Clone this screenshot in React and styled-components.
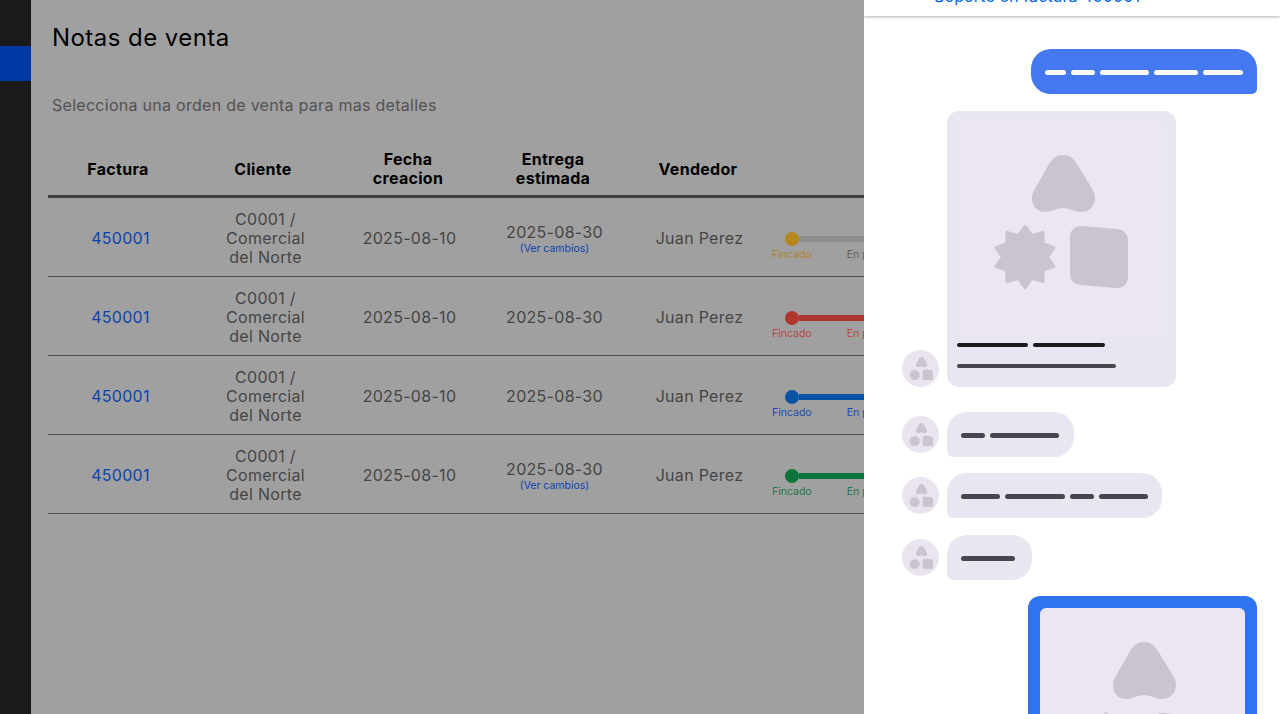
import React from "react";
import styled, { createGlobalStyle } from "styled-components";

const Global = createGlobalStyle`
  html, body { margin: 0; padding: 0; height: 100%; background: #d6d6d6; }
  body { font-family: Inter, "Liberation Sans", sans-serif; }
  #root { height: 100%; }
`;

const Page = styled.div`
  position: relative;
  display: flex;
  width: 1280px;
  height: 714px;
  overflow: hidden;
  background: #d6d6d6;
`;

const Sidebar = styled.nav`
  flex: 0 0 31px;
  background: #232323;
  padding-top: 46px;
  box-sizing: border-box;
`;

const SideItem = styled.div`
  height: 35px;
  background: #004cdd;
`;

const Main = styled.main`
  flex: 1;
  min-width: 0;
  padding: 23px 0 0 17px;
  overflow: hidden;
`;

const Title = styled.h1`
  margin: 0 0 0 4px;
  font-size: 24px;
  line-height: 30px;
  font-weight: 400;
  letter-spacing: 0.45px;
  color: #000;
`;

const Subtitle = styled.p`
  margin: 42px 0 0 4px;
  font-size: 16px;
  line-height: 20px;
  letter-spacing: 0.28px;
  color: #6e6e6e;
`;

const Table = styled.table`
  margin-top: 26px;
  width: 1220px;
  table-layout: fixed;
  border-collapse: separate;
  border-spacing: 0;
`;

const Col = styled.col`
  width: ${(p) => p.$w}px;
`;

const Th = styled.th`
  padding: 9px 5px 7px 0;
  font-size: 16px;
  line-height: 19px;
  font-weight: 700;
  letter-spacing: 0.3px;
  color: #000;
  text-align: center;
  border-bottom: 3px solid #555;
`;

const Td = styled.td`
  padding: 12px 25px 9px 23px;
  font-size: 16px;
  line-height: 19px;
  letter-spacing: 0.3px;
  color: #5c5c5c;
  text-align: center;
  vertical-align: middle;
  border-bottom: 1px solid #6a6a6a;
`;

const InvoiceTd = styled(Td)`
  padding-left: 24px;
  padding-right: 24px;
`;

const StepTd = styled(Td)`
  padding: 34px 0 0;
  vertical-align: top;
  text-align: left;
`;

const InvoiceLink = styled.span`
  color: #0f5ae8;
`;

const ChangesLink = styled.div`
  font-size: 10.5px;
  line-height: 13px;
  letter-spacing: 0;
  color: #0f5ae8;
`;

const TrackRow = styled.div`
  display: flex;
  align-items: center;
  margin-left: 12px;
`;

const Dot = styled.span`
  flex: none;
  width: 14px;
  height: 14px;
  border-radius: 50%;
  background: ${(p) => p.$c};
`;

const Bar = styled.span`
  flex: 0 0 300px;
  height: 6px;
  background: ${(p) => p.$c};
`;

const Labels = styled.div`
  display: flex;
  gap: 35px;
  margin: 2px 0 0 -1px;
  font-size: 10.5px;
  line-height: 14px;
  letter-spacing: 0;
  white-space: nowrap;
  color: ${(p) => p.$c};
`;

const SecondLabel = styled.span`
  color: ${(p) => p.$c};
`;

const Backdrop = styled.div`
  position: absolute;
  inset: 0;
  background: rgba(0, 0, 0, 0.25);
`;

const Panel = styled.aside`
  position: absolute;
  top: 0;
  right: 0;
  bottom: 0;
  width: 416px;
  background: #fff;
  overflow: hidden;
  display: flex;
  flex-direction: column;
`;

const PanelHeader = styled.header`
  flex: none;
  height: 16px;
  overflow: hidden;
  box-shadow: 0 1px 3px rgba(0, 0, 0, 0.3);
  position: relative;
  text-align: left;
  padding-left: 70px;
`;

const HeaderLink = styled.div`
  margin-top: -13px;
  font-size: 16px;
  line-height: 19px;
  letter-spacing: 0.14px;
  color: #0066ff;
  white-space: nowrap;
`;

const Thread = styled.div`
  flex: 1;
  display: flex;
  flex-direction: column;
  padding: 33px 23px 0 38px;
  min-height: 0;
`;

const OutRow = styled.div`
  display: flex;
  justify-content: flex-end;
  margin-top: ${(p) => p.$mt || 0}px;
`;

const InRow = styled.div`
  display: flex;
  align-items: flex-end;
  gap: 8px;
  margin-top: ${(p) => p.$mt}px;
`;

const Avatar = styled.div`
  flex: none;
  width: 37px;
  height: 37px;
  margin-bottom: ${(p) => p.$mb || 0}px;
  border-radius: 50%;
  background: #e9e4ee;
  display: flex;
  align-items: center;
  justify-content: center;
`;

const OutBubble = styled.div`
  display: flex;
  align-items: center;
  gap: 5px;
  height: 45px;
  box-sizing: border-box;
  padding: 1px 14px 0;
  background: #4378f0;
  border-radius: 20px 20px 5px 20px;
`;

const InBubble = styled.div`
  display: flex;
  align-items: center;
  gap: 5px;
  width: ${(p) => p.$w}px;
  height: 45px;
  box-sizing: border-box;
  padding: 1px 0 0 14px;
  background: #e8e7f1;
  border-radius: 20px 20px 20px 6px;
`;

const Dash = styled.span`
  flex: none;
  display: block;
  width: ${(p) => p.$w}px;
  height: ${(p) => p.$h || 5}px;
  border-radius: 3px;
  background: ${(p) => p.$c || "#49454f"};
`;

const Card = styled.div`
  flex: none;
  width: 229px;
  height: 276px;
  box-sizing: border-box;
  padding-top: 12px;
  background: #e8e7f1;
  border-radius: 12px;
  display: flex;
  flex-direction: column;
`;

const CardImage = styled.div`
  height: 215px;
  margin: 0 12px;
  background: #ebe6f1;
  display: flex;
  justify-content: center;
  padding: 32px 2px 0 0;
  box-sizing: border-box;
`;

const CardLines = styled.div`
  display: flex;
  flex-direction: column;
  gap: 17px;
  padding: 5px 10px 0;
`;

const LineRow = styled.div`
  display: flex;
  gap: 5px;
`;

const SentCard = styled.div`
  flex: none;
  width: 229px;
  height: 300px;
  box-sizing: border-box;
  padding: 12px;
  background: #2f73ee;
  border-radius: 12px;
`;

const SentImage = styled.div`
  height: 100%;
  background: #ebe6f1;
  border-radius: 6px;
  display: flex;
  justify-content: center;
  padding: 34px 2px 0 0;
  box-sizing: border-box;
`;

const starPoints = Array.from({ length: 20 }, (_, i) => {
  const r = i % 2 === 0 ? 30.5 : 22.5;
  const a = (i * Math.PI) / 10;
  return `${(32 + r * Math.sin(a)).toFixed(2)},${(102 - r * Math.cos(a)).toFixed(2)}`;
}).join(" ");

function Shapes({ size }) {
  return (
    <svg width={size} height={(size * 134) / 135} viewBox="0 0 135 134" fill="#c9c4cf">
      <path d="M70 0C76 0 80 3 84 9L98 32C101 37 102 39 102 43C102 51 96 57 88 57C82 57 76 53 70 53C64 53 58 57 52 57C44 57 39 51 39 43C39 39 40 37 43 32L56 9C60 3 64 0 70 0Z" />
      <polygon points={starPoints} stroke="#c9c4cf" strokeWidth="3" strokeLinejoin="round" />
      <path d="M89 71L124 74C131 75 135 79 135 85L135 121C135 129 130 134 122 133L88 130C81 129 77 126 77 118L77 82C77 75 82 71 89 71Z" />
    </svg>
  );
}

const rows = [
  { c: "#f5b52a", bar: "#bdbdbd", lab: "#e8b040", second: "#7f7f7f", changes: true },
  { c: "#e8483f", bar: "#e8483f", lab: "#f0605a", second: "#f0605a" },
  { c: "#0d6fdc", bar: "#0d6fdc", lab: "#1f68e0", second: "#1f68e0" },
  { c: "#119a4e", bar: "#119a4e", lab: "#2fa066", second: "#2fa066", changes: true },
];

const COLS = [145, 145, 145, 145, 145, 495];

export default function App() {
  return (
    <Page>
      <Global />
      <Sidebar>
        <SideItem />
      </Sidebar>
      <Main>
        <Title>Notas de venta</Title>
        <Subtitle>Selecciona una orden de venta para mas detalles</Subtitle>
        <Table>
          <colgroup>
            {COLS.map((w, i) => (
              <Col key={i} $w={w} />
            ))}
          </colgroup>
          <thead>
            <tr>
              <Th>Factura</Th>
              <Th>Cliente</Th>
              <Th>Fecha<br />creacion</Th>
              <Th>Entrega<br />estimada</Th>
              <Th>Vendedor</Th>
              <Th />
            </tr>
          </thead>
          <tbody>
            {rows.map((r, i) => (
              <tr key={i}>
                <InvoiceTd><InvoiceLink>450001</InvoiceLink></InvoiceTd>
                <InvoiceTd>C0001 / Comercial del Norte</InvoiceTd>
                <Td>2025-08-10</Td>
                <Td>
                  2025-08-30
                  {r.changes && <ChangesLink>(Ver cambios)</ChangesLink>}
                </Td>
                <Td>Juan Perez</Td>
                <StepTd>
                  <TrackRow>
                    <Dot $c={r.c} />
                    <Bar $c={r.bar} />
                  </TrackRow>
                  <Labels $c={r.lab}>
                    <span>Fincado</span>
                    <SecondLabel $c={r.second}>En proceso</SecondLabel>
                  </Labels>
                </StepTd>
              </tr>
            ))}
          </tbody>
        </Table>
      </Main>
      <Backdrop />
      <Panel>
        <PanelHeader>
          <HeaderLink>Soporte en factura 450001</HeaderLink>
        </PanelHeader>
        <Thread>
          <OutRow>
            <OutBubble>
              {[21, 24, 49, 44, 40].map((w, i) => (
                <Dash key={i} $w={w} $c="#fff" />
              ))}
            </OutBubble>
          </OutRow>
          <InRow $mt={17}>
            <Avatar>
              <Shapes size={24} />
            </Avatar>
            <Card>
              <CardImage>
                <Shapes size={135} />
              </CardImage>
              <CardLines>
                <LineRow>
                  <Dash $w={71} $c="#1d1b20" $h={4} />
                  <Dash $w={72} $c="#1d1b20" $h={4} />
                </LineRow>
                <Dash $w={159} $h={4} />
              </CardLines>
            </Card>
          </InRow>
          <InRow $mt={25}>
            <Avatar $mb={4}>
              <Shapes size={24} />
            </Avatar>
            <InBubble $w={127}>
              <Dash $w={24} />
              <Dash $w={69} />
            </InBubble>
          </InRow>
          <InRow $mt={16}>
            <Avatar $mb={4}>
              <Shapes size={24} />
            </Avatar>
            <InBubble $w={215}>
              <Dash $w={39} />
              <Dash $w={60} />
              <Dash $w={24} />
              <Dash $w={49} />
            </InBubble>
          </InRow>
          <InRow $mt={17}>
            <Avatar $mb={4}>
              <Shapes size={24} />
            </Avatar>
            <InBubble $w={85}>
              <Dash $w={54} />
            </InBubble>
          </InRow>
          <OutRow $mt={16}>
            <SentCard>
              <SentImage>
                <Shapes size={135} />
              </SentImage>
            </SentCard>
          </OutRow>
        </Thread>
      </Panel>
    </Page>
  );
}
